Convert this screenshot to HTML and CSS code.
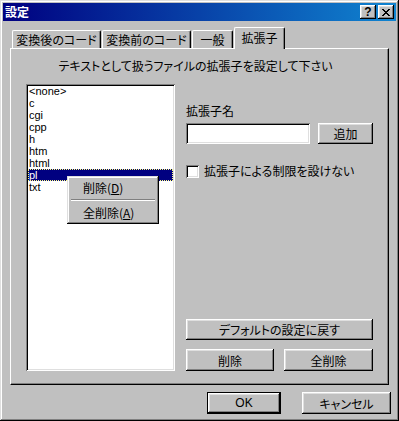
FILE: index.html
```html
<!DOCTYPE html>
<html lang="ja">

<head>
    <meta charset="UTF-8">
    <meta name="viewport" content="width=device-width, initial-scale=1.0">
    <title>設定</title>
    <link rel="stylesheet" href="styles.css">
</head>

<body>

    <div class="window">
        <div class="titlebar">
            <span class="title">設定</span>
            <div class="caption-buttons">
                <div class="caption-button help">?</div>
                <div class="caption-button">
                    <svg width="8" height="7" viewBox="0 0 8 7" shape-rendering="crispEdges">
                        <path fill="#000" d="M0 0h2v1H0z M6 0h2v1H6z M1 1h2v1H1z M5 1h2v1H5z M2 2h4v1H2z M3 3h2v1H3z M2 4h4v1H2z M1 5h2v1H1z M5 5h2v1H5z M0 6h2v1H0z M6 6h2v1H6z"/>
                    </svg>
                </div>
            </div>
        </div>

        <div class="tabs">
            <div class="tab tab-wide">変換後のコード</div>
            <div class="tab tab-wide">変換前のコード</div>
            <div class="tab tab-short">一般</div>
            <div class="tab tab-active">拡張子</div>
        </div>

        <div class="panel">
            <p class="hint">テキストとして扱うファイルの拡張子を設定して下さい</p>

            <div class="panel-main">
                <div class="listbox">
                    <ul class="ext-list">
                        <li>&lt;none&gt;</li>
                        <li>c</li>
                        <li>cgi</li>
                        <li>cpp</li>
                        <li>h</li>
                        <li>htm</li>
                        <li>html</li>
                        <li class="selected">pl</li>
                        <li>txt</li>
                    </ul>
                </div>

                <div class="side">
                    <div class="field-label">拡張子名</div>
                    <div class="add-row">
                        <div class="textbox"></div>
                        <button class="btn btn-add" type="button">追加</button>
                    </div>
                    <div class="check-row">
                        <span class="checkbox"></span>
                        <span>拡張子による制限を設けない</span>
                    </div>

                    <div class="spacer"></div>

                    <button class="btn btn-reset" type="button">デフォルトの設定に戻す</button>
                    <div class="delete-row">
                        <button class="btn btn-delete" type="button">削除</button>
                        <button class="btn btn-delete-all" type="button">全削除</button>
                    </div>
                </div>
            </div>
        </div>

        <div class="footer">
            <button class="btn btn-ok" type="button">OK</button>
            <button class="btn btn-cancel" type="button">キャンセル</button>
        </div>

        <div class="menu">
            <div class="menu-item">削除(<u>D</u>)</div>
            <div class="menu-sep"></div>
            <div class="menu-item">全削除(<u>A</u>)</div>
        </div>
    </div>

</body>

</html>
```

FILE: styles.css
```css
body {
    margin: 0;
    padding: 0;
    background-color: #c0c0c0;
    font-family: "Noto Sans CJK JP", "Liberation Sans", sans-serif;
    font-size: 12px;
    font-feature-settings: "palt" 1;
    color: #000;
}

.window {
    position: relative;
    width: 399px;
    height: 421px;
    box-sizing: border-box;
    padding: 3px;
    display: flex;
    flex-direction: column;
    background-color: #c0c0c0;
    box-shadow: inset -1px -1px #000, inset 1px 1px #dfdfdf, inset -2px -2px #808080, inset 2px 2px #fff;
}

.titlebar {
    height: 18px;
    flex: none;
    display: flex;
    align-items: center;
    justify-content: space-between;
    padding-left: 2px;
    background: linear-gradient(to right, #000080, #1084d0);
    color: #fff;
}

.title {
    font-weight: bold;
    line-height: 18px;
}

.caption-buttons {
    display: flex;
    gap: 2px;
    padding-right: 2px;
}

.caption-button {
    width: 16px;
    height: 14px;
    box-sizing: border-box;
    display: flex;
    align-items: center;
    justify-content: center;
    background-color: #c0c0c0;
    color: #000;
    box-shadow: inset -1px -1px #000, inset 1px 1px #fff, inset -2px -2px #808080, inset 2px 2px #dfdfdf;
}

.caption-button.help {
    font-family: "Liberation Sans", sans-serif;
    font-weight: bold;
    font-size: 12px;
    line-height: 14px;
    padding-bottom: 1px;
}

/* tabs */
.tabs {
    position: relative;
    z-index: 1;
    height: 21px;
    flex: none;
    margin: 6px 7px 0;
    padding-left: 2px;
    display: flex;
    align-items: flex-end;
}

.tab {
    height: 18px;
    box-sizing: border-box;
    margin-right: 1px;
    border-top: 1px solid #fff;
    border-left: 1px solid #fff;
    border-right: 1px solid #000;
    border-radius: 2px 2px 0 0;
    box-shadow: inset -1px 0 #808080;
    background-color: #c0c0c0;
    text-align: center;
    line-height: 17px;
    white-space: nowrap;
}

.tab-wide {
    width: 89px;
}

.tab-short {
    width: 41px;
}

.tab-active {
    width: 51px;
    height: 22px;
    margin-bottom: -1px;
    line-height: 19px;
}

.panel {
    height: 337px;
    flex: none;
    box-sizing: border-box;
    margin: 0 7px;
    border-top: 1px solid #fff;
    border-left: 1px solid #fff;
    border-right: 1px solid #000;
    border-bottom: 1px solid #000;
    box-shadow: inset -1px -1px #808080;
}

.hint {
    margin: 10px 0 0;
    padding-right: 8px;
    line-height: 14px;
    text-align: center;
}

.panel-main {
    margin-top: 11px;
    padding-left: 15px;
    height: 287px;
    display: flex;
    gap: 11px;
}

/* sunken boxes */
.listbox,
.textbox,
.checkbox {
    box-sizing: border-box;
    background-color: #fff;
    box-shadow: inset 1px 1px #808080, inset -1px -1px #fff, inset 2px 2px #000, inset -2px -2px #dfdfdf;
}

.listbox {
    width: 149px;
    height: 287px;
    padding: 2px;
}

.ext-list {
    list-style: none;
    margin: -1px 0 0;
    padding: 0;
    font-family: "Liberation Sans", sans-serif;
    font-size: 11px;
}

.ext-list li {
    height: 12px;
    line-height: 12px;
    padding-left: 1px;
}

.ext-list li.selected {
    background-color: #000080;
    color: #fff;
    outline: 1px dotted #ffff80;
    outline-offset: -1px;
}

.side {
    width: 187px;
    display: flex;
    flex-direction: column;
}

.field-label {
    margin-top: 20px;
    line-height: 14px;
}

.add-row {
    margin-top: 5px;
    display: flex;
    gap: 8px;
}

.textbox {
    width: 124px;
    height: 21px;
}

.check-row {
    margin-top: 20px;
    display: flex;
    align-items: center;
    gap: 5px;
    line-height: 14px;
}

.checkbox {
    width: 13px;
    height: 13px;
}

.spacer {
    flex: 1;
}

.delete-row {
    margin-top: 9px;
    display: flex;
    gap: 10px;
}

/* buttons */
.btn {
    height: 21px;
    padding: 0;
    border: none;
    background-color: #c0c0c0;
    font-family: inherit;
    font-size: 12px;
    font-feature-settings: "palt" 1;
    color: #000;
    box-shadow: inset -1px -1px #000, inset 1px 1px #fff, inset -2px -2px #808080, inset 2px 2px #dfdfdf;
}

.btn-add {
    width: 55px;
}

.btn-reset {
    width: 187px;
}

.btn-delete {
    width: 88px;
    height: 22px;
}

.btn-delete-all {
    width: 89px;
    height: 22px;
}

.footer {
    margin-top: 7px;
    padding-right: 5px;
    display: flex;
    justify-content: flex-end;
    gap: 21px;
}

.btn-ok {
    width: 74px;
    height: 22px;
    font-family: "Liberation Sans", sans-serif;
    box-shadow: inset 0 0 0 1px #000, inset -2px -2px #000, inset 2px 2px #fff, inset -3px -3px #808080, inset 3px 3px #dfdfdf;
}

.btn-cancel {
    width: 89px;
    height: 22px;
}

/* context menu */
.menu {
    position: absolute;
    left: 67px;
    top: 176px;
    width: 92px;
    box-sizing: border-box;
    padding: 3px;
    background-color: #c0c0c0;
    box-shadow: inset -1px -1px #000, inset 1px 1px #dfdfdf, inset -2px -2px #808080, inset 2px 2px #fff;
}

.menu-item {
    height: 17px;
    line-height: 17px;
    padding-left: 13px;
}

.menu-sep {
    margin: 3px 1px;
    border-top: 1px solid #808080;
    border-bottom: 1px solid #fff;
}
```
